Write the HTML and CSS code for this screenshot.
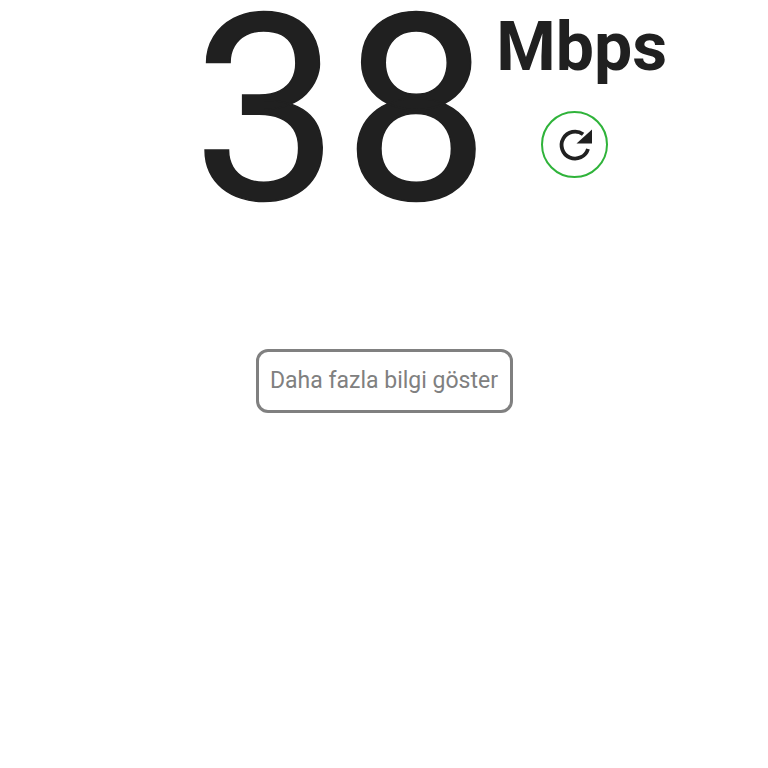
FILE: index.html
```html
<!DOCTYPE html>
<html lang="en">
<head>
    <meta charset="UTF-8">
    <title>Speed</title>
    <link rel="stylesheet" href="styles.css">
</head>
<body>
    <div class="result">
        <div class="speed">38</div>
        <div class="side">
            <div class="unit">Mbps</div>
            <div class="refresh">
                <svg width="34" height="34" viewBox="0 0 34 34">
                    <path d="M30 21a13.5 13.5 0 1 1-4.9-14.8" fill="none" stroke="#202020" stroke-width="3.8"/>
                    <path d="M18.5 15.5h15.5v-14z" fill="#202020"/>
                </svg>
            </div>
        </div>
    </div>
    <div class="more-row">
        <button class="more">Daha fazla bilgi göster</button>
    </div>
</body>
</html>
```

FILE: styles.css
```css
body {
    margin: 0;
    background: #fff;
    font-family: Roboto, sans-serif;
}
.result {
    display: flex;
    height: 349px;
    padding-left: 193px;
}
.speed {
    font-size: 260px;
    line-height: 221px;
    letter-spacing: 4px;
    -webkit-text-stroke: 1.5px #202020;
    color: #202020;
}
.side {
    display: flex;
    flex-direction: column;
    align-items: flex-start;
    margin-left: 3px;
}
.unit {
    font-size: 68px;
    font-weight: 700;
    line-height: 94px;
    color: #202020;
}
.refresh {
    width: 63px;
    height: 63px;
    margin-top: 17px;
    margin-left: 45px;
    border: 2.5px solid #2fb33a;
    border-radius: 50%;
    display: flex;
    align-items: center;
    justify-content: center;
}
.more-row {
    display: flex;
    justify-content: center;
}
.more {
    width: 257px;
    height: 64px;
    background: #fff;
    border: 3px solid #808080;
    border-radius: 12px;
    font-family: Roboto, sans-serif;
    font-size: 23px;
    color: #808080;
    padding: 0 0 2px;
}
```
